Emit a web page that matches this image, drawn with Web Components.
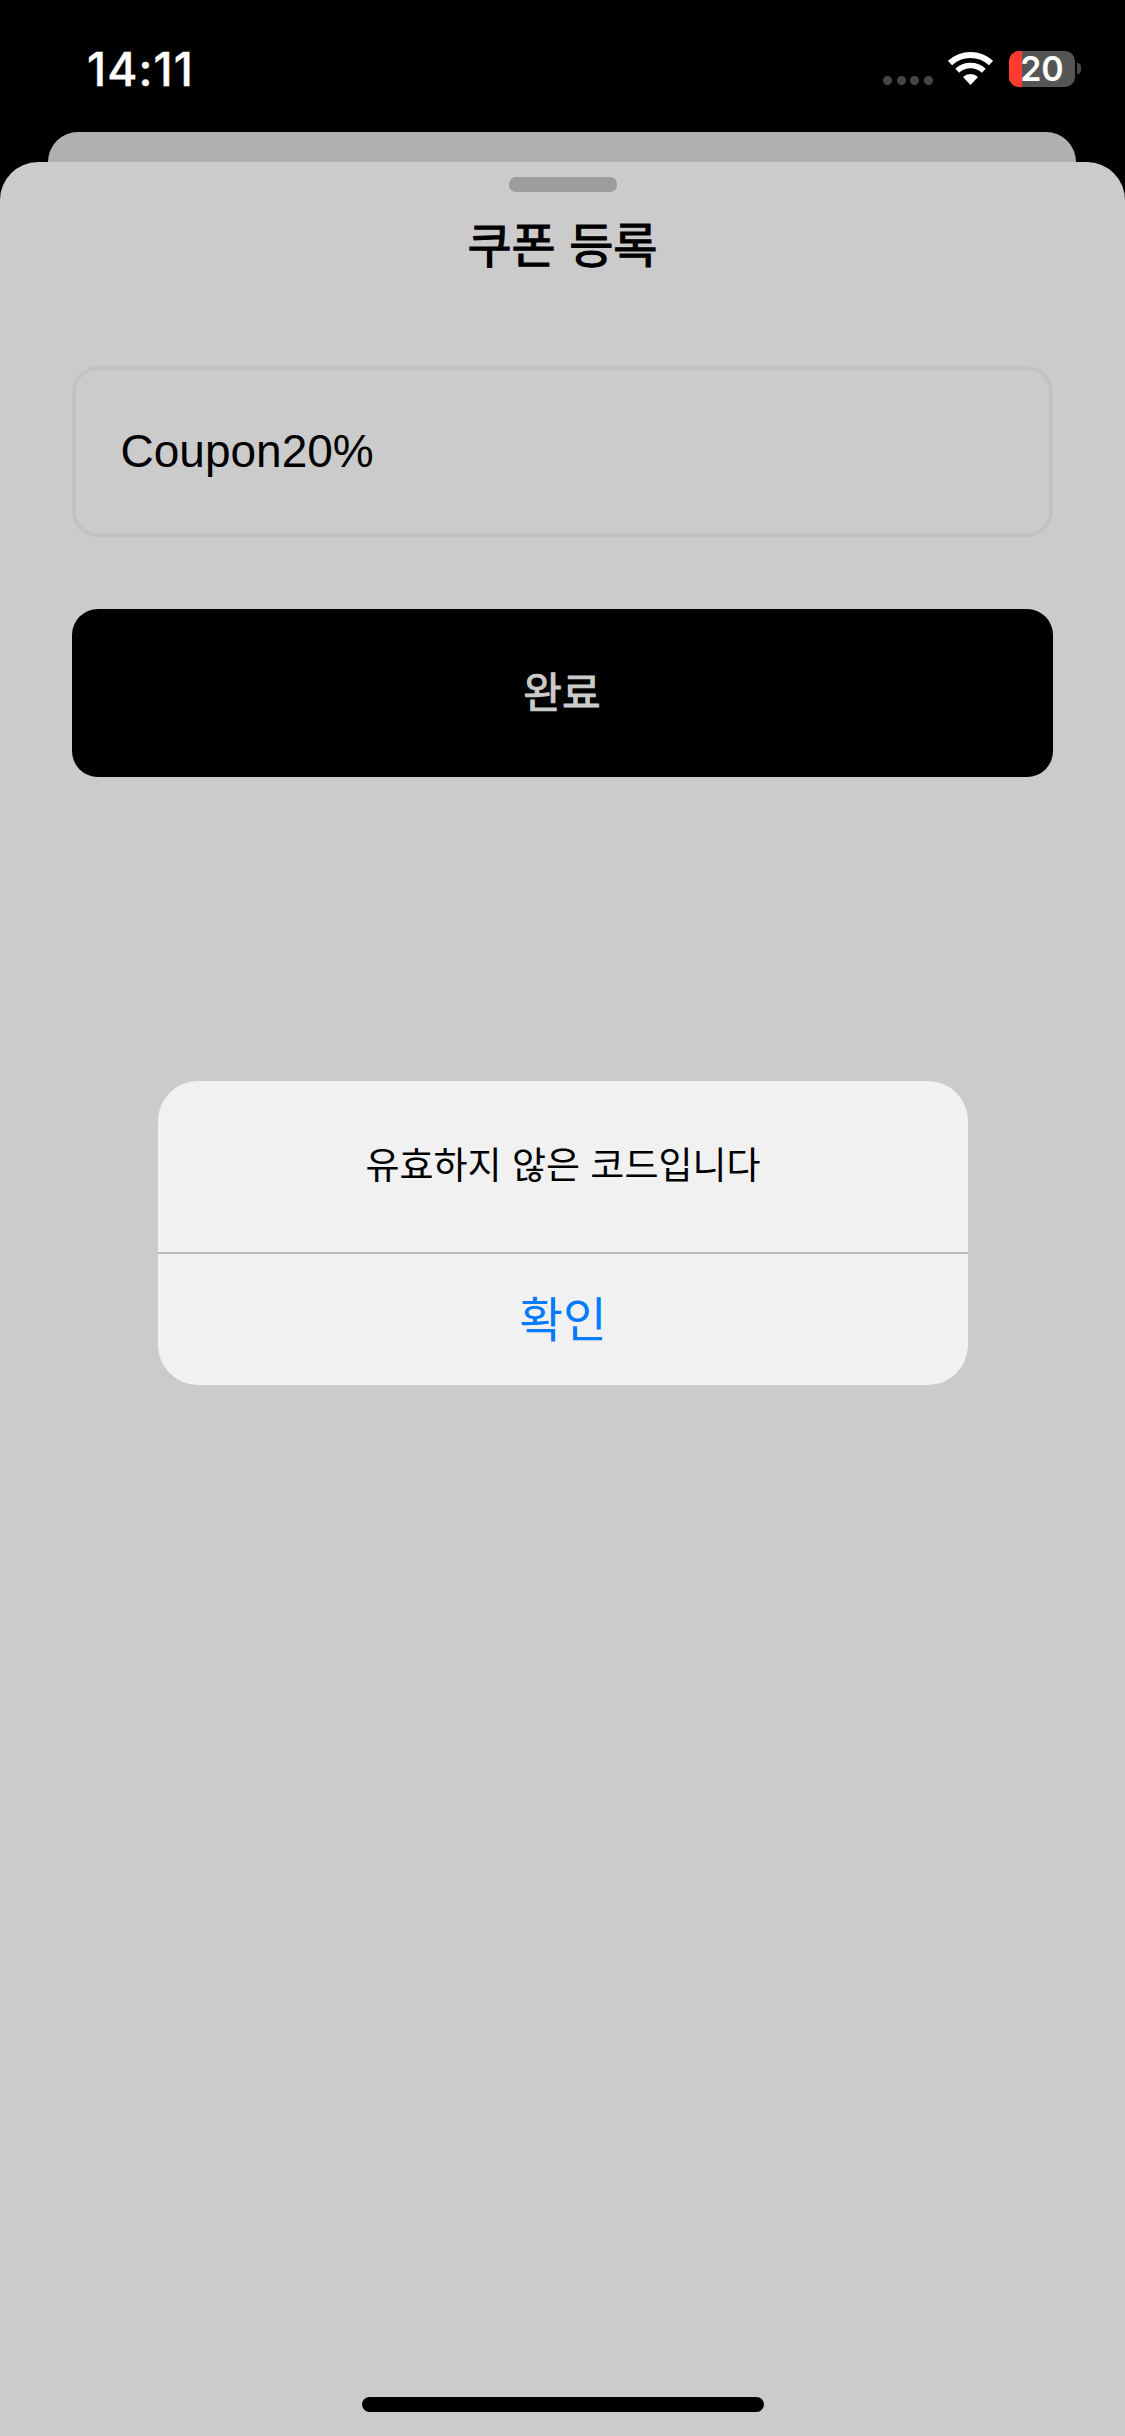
<!DOCTYPE html>
<html lang="ko">
<head>
<meta charset="utf-8">
<title>쿠폰 등록</title>
<style>
html,body{margin:0;padding:0;background:#000;height:100%}
body{width:1125px;height:2436px;overflow:hidden;font-family:"Liberation Sans","Noto Sans CJK KR",sans-serif}
</style>
</head>
<body>
<app-screen>
  <status-bar slot="status" time="14:11" battery="20"></status-bar>
  <sheet-card slot="sheet" heading="쿠폰 등록">
    <coupon-field>Coupon20%</coupon-field>
    <primary-button>완료</primary-button>
  </sheet-card>
  <alert-dialog slot="overlay" message="유효하지 않은 코드입니다" action="확인"></alert-dialog>
</app-screen>
<script>
function def(name, css, html, init){
  customElements.define(name, class extends HTMLElement{
    constructor(){super();const r=this.attachShadow({mode:'open'});
      r.innerHTML='<style>'+css+'</style>'+html;}
    connectedCallback(){if(init)init(this,this.shadowRoot);}
  });
}
def('app-screen',
 `:host{display:flex;flex-direction:column;position:relative;width:1125px;height:2436px;background:#000;overflow:hidden}
  .back{height:30px;margin:0 49px 0 48px;background:#b0b0b0;border-radius:30px 30px 0 0;flex:none}`,
 `<slot name="status"></slot><div class="back"></div><slot name="sheet"></slot><slot name="overlay"></slot>`);
def('status-bar',
 `:host{display:flex;justify-content:space-between;height:132px;flex:none;padding:0 44px 0 87px;box-sizing:border-box;color:#fff}
  .time{font:500 46px/46px Inter,"Liberation Sans",sans-serif;margin-top:46px;letter-spacing:1.1px;-webkit-text-stroke:.4px #fff}
  .right{display:flex;align-items:flex-start;padding-top:51px}
  .dots{display:flex;gap:4.6px;margin-top:25px;margin-right:15px}
  .dots i{width:9px;height:9px;border-radius:50%;background:#464646;display:block}
  svg{display:block;margin-top:1px;margin-right:16px}
  .bat{width:66px;height:36px;border-radius:10px;background:#555;position:relative;display:flex;justify-content:center;align-items:center;box-sizing:border-box}
  .bat b{position:absolute;left:0;top:0;bottom:0;width:13px;background:#ff3b30;border-radius:10px 0 0 10px}
  .bat span{position:relative;font:600 34px/36px Inter,"Liberation Sans",sans-serif;color:#fff;white-space:nowrap}
  .nub{width:4px;height:11px;margin:12px 0 0 2px;background:#484848;border-radius:0 6px 6px 0}`,
 `<div class="time"></div>
  <div class="right">
   <div class="dots"><i></i><i></i><i></i><i></i></div>
   <svg width="45" height="33" viewBox="0 0 45 33" fill="none" stroke="#fff">
    <path d="M2.04 11.07A30 30 0 0 1 42.96 11.07" stroke-width="6"/>
    <path d="M9.2 18.75A19.5 19.5 0 0 1 35.8 18.75" stroke-width="5.5"/>
    <path d="M22.5 33L15 24.96A11 11 0 0 1 30 24.96Z" fill="#fff" stroke="none"/>
   </svg>
   <div class="bat"><b></b><span></span></div>
   <div class="nub"></div>
  </div>`,
 (h,r)=>{r.querySelector('.time').textContent=h.getAttribute('time');r.querySelector('.bat span').textContent=h.getAttribute('battery');});
def('sheet-card',
 `:host{display:flex;flex-direction:column;flex:1;min-height:0;background:#cbcbcb;border-radius:38px 38px 0 0;align-items:center}
  .handle{width:108px;height:15px;border-radius:7px;background:#9c9c9c;margin-top:15px;flex:none}
  h1{margin:20px 0 94px;font:400 48px/60px "Noto Sans CJK KR",sans-serif;color:#000;-webkit-text-stroke:1.2px #000}
  .content{display:flex;flex-direction:column;gap:72px;width:981px;margin-left:-1px}
  .home{width:402px;height:15px;border-radius:8px;background:#000;margin-top:auto;margin-bottom:24px;flex:none}`,
 `<div class="handle"></div><h1></h1><div class="content"><slot></slot></div><div class="home"></div>`,
 (h,r)=>{r.querySelector('h1').textContent=h.getAttribute('heading');});
def('coupon-field',
 `:host{display:flex;align-items:center;height:171px;box-sizing:border-box;border:4px solid #c2c2c2;border-radius:26px;padding:0 45px;font:400 46px/1.2 "Liberation Sans",sans-serif;color:#000}`,
 `<slot></slot>`);
def('primary-button',
 `:host{display:flex;align-items:center;justify-content:center;height:168px;padding-bottom:5px;box-sizing:border-box;background:#000;border-radius:26px;color:#cbcbcb;font:400 42px/1.2 "Noto Sans CJK KR",sans-serif;-webkit-text-stroke:1px #cbcbcb}`,
 `<slot></slot>`);
def('alert-dialog',
 `:host{position:absolute;left:158px;top:1081px;width:810px;height:304px;display:flex;flex-direction:column;background:#f1f1f1;border-radius:40px;overflow:hidden}
  .msg{height:171px;display:flex;align-items:center;justify-content:center;font:400 37px/1.2 "Noto Sans CJK KR",sans-serif;color:#000;flex:none;padding-bottom:6px;box-sizing:border-box}
  .line{height:2px;background:#bcbcbc;flex:none}
  .act{flex:1;display:flex;align-items:center;justify-content:center;font:400 47.5px/1.2 "Noto Sans CJK KR",sans-serif;color:#007aff;padding-bottom:7px}`,
 `<div class="msg"></div><div class="line"></div><div class="act"></div>`,
 (h,r)=>{r.querySelector('.msg').textContent=h.getAttribute('message');r.querySelector('.act').textContent=h.getAttribute('action');});
</script>
</body>
</html>
